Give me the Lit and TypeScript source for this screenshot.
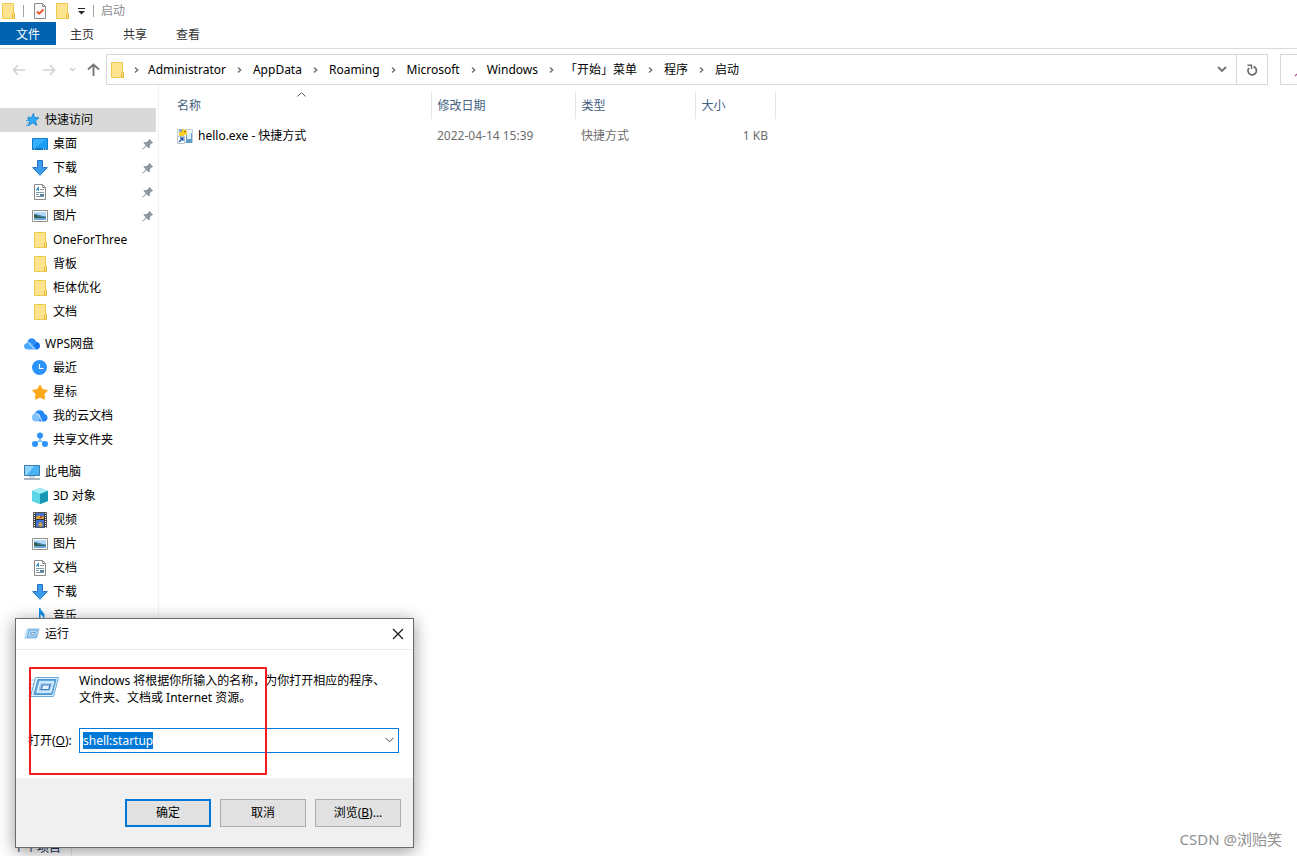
import { LitElement, html, svg, css, nothing, TemplateResult } from "lit";
import { customElement, property, query } from "lit/decorators.js";
import { classMap } from "lit/directives/class-map.js";

const icon = (w: number, h: number, body: unknown) =>
  html`<svg width=${w} height=${h} viewBox="0 0 ${w} ${h}" aria-hidden="true">${body}</svg>`;

const folder = () => icon(16, 16, svg`
  <path d="M2.500.5h11v10h1v5h-12z" fill="#ffe48f" stroke="#ecc94f"/>
  <path d="M12.500 15.500v-4l.8-1h1.200v5z" fill="#ffe48f" stroke="#e3bb3a"/>`);

const monitor = svg`
  <path d="M.5 1.500h15v10H.5z" fill="#49b4f5" stroke="#3d7ba6"/>
  <path d="M1 2h9L3 11H1z" fill="#8fd6ff"/>
  <path d="M5 12h6v2H5z" fill="#c9dbe6"/>
  <path d="M0 15h16" stroke="#8797a2" stroke-width="1.400"/>`;

const runGlyph = (size: number) => html`
  <svg width=${size} height=${size} viewBox="0 0 32 32" aria-hidden="true">
    <path d="M3 8h5M1 12h5M0 16h5M1 20h4M0 24h4" stroke="#b9dcf3" stroke-width="1.500"/>
    <path d="M7.500 5.500h23l-5 19h-23z" fill="#dff1fc" stroke="#6aa9d8" stroke-linejoin="round"/>
    <path d="M10 7.500h18l-4 15H6z" fill="#5fabe2" stroke="#4a93cd"/>
    <path d="M12 10h13.500l-2.800 10H9.200z" fill="#9accf2" stroke="#e9f6ff" stroke-width="1.300"/>
    <path d="M14.500 13h7.500l-1.300 4.500h-7.500z" fill="#e6f4fd" stroke="#4678ba" stroke-width="1.200"/>
  </svg>`;

const icons: Record<string, () => TemplateResult> = {
  folder,
  quick: () => icon(16, 16, svg`
    <path d="M9.500 1.200l1 4.300 4.500.2-3.400 3 1.200 4.800-4.100-2.600-4.200 2.800 1.400-4.700L3.200 6l4.300-.4z" fill="#31a8f5" stroke="#1482cf" stroke-width=".8"/>
    <path d="M2 8.500h3M3 11h2.500M2 13.500h2M4 5h2" stroke="#3a9fe0"/>`),
  desktop: () => icon(16, 16, svg`
    <path d="M.5 2.500h15v11H.5z" fill="#1b9df5" stroke="#147ac4"/>
    <path d="M1 3h13L3 12H1z" fill="#35b0ff"/>
    <path d="M1 13h14" stroke="#0a5d9c"/><path d="M2 13h1M11 13h1M13 13h1" stroke="#fff"/>`),
  download: () => icon(16, 16, svg`
    <path d="M5.500.5h5v7h4.800L8 15.300.7 7.500h4.800z" fill="#3a9bea" stroke="#2377c6"/>`),
  document: () => icon(16, 16, svg`
    <path d="M2.500.5h8l3 3v12h-11z" fill="#fff" stroke="#8a8a8a"/>
    <path d="M10.500.5v3h3" fill="none" stroke="#8a8a8a"/>
    <path d="M4 6.500L6.500 3v4M4.500 5.500h2.500" fill="none" stroke="#2f8fc9"/>
    <path d="M8 5.500h4M4 8.500h8M4 10.500h3M8 10.500h4M4 12.500h8" fill="none" stroke="#7f9aa8"/>
    <path d="M8 10h4v2H8z" fill="#4d8098"/>`),
  picture: () => icon(16, 16, svg`
    <path d="M.5 2.500h15v11H.5z" fill="#fff" stroke="#8f8f8f"/>
    <path d="M2 4h12v8H2z" fill="#b4d8f7"/>
    <path d="M2 6c4 0 7 2 12 2.500V10H2z" fill="#4684b0"/>
    <path d="M2 6.500c3 .5 4 2.500 7 2.500l5 .5v.5H2z" fill="#355e4d"/>
    <path d="M2 10h12v2H2z" fill="#6aa9d9"/>`),
  wps: () => icon(16, 16, svg`
    <path d="M4 5a5 5 0 0 1 8 1 4 4 0 0 1 4 4c0 2-1.500 3.500-4 3.500L5 6z" fill="#1673ee"/>
    <path d="M3.500 5.500C5 1.500 9.500 1 11.500 4.500l1 2-3 3z" fill="#2f8dfa"/>
    <path d="M3.500 6.500c2-1 4 0 5 1.500l4.500 5.500H4c-5 0-5.500-5.500-.5-7z" fill="#4aa8ff"/>
    <path d="M4.500 6.500L10.500 13.500" stroke="#fff" stroke-width=".8"/>`),
  recent: () => icon(16, 16, svg`
    <circle cx="7.500" cy="7.500" r="7.500" fill="#2b93fb"/>
    <path d="M7.500 4v4.500h4" fill="none" stroke="#fff" stroke-width="1.200"/>`),
  star: () => icon(16, 16, svg`
    <path d="M8 1l2.400 4.500 5.100.9-3.600 3.600.7 5.200L8 13l-4.600 2.200.7-5.200L.5 6.400l5.100-.9z" fill="#fea71b" stroke="#fea71b" stroke-linejoin="round"/>`),
  cloud: () => icon(16, 16, svg`
    <path d="M3 5.500a5 5 0 0 1 9.500.5A3.800 3.800 0 0 1 12 13.500H7z" fill="#2389fa"/>
    <circle cx="4" cy="9.500" r="4" fill="#7fc2ff"/>
    <path d="M4 5.500a4 4 0 0 1 4 3.500l2 4.500" fill="none" stroke="#fff" stroke-width=".8"/>`),
  share: () => icon(16, 16, svg`
    <path d="M8 4v4.500M8 8.500l-5 3M8 8.500l5 3" stroke="#5aadff" stroke-width="1.400"/>
    <circle cx="8" cy="3.500" r="3" fill="#2b93fb"/>
    <circle cx="3" cy="12" r="3" fill="#2b93fb"/>
    <circle cx="13" cy="12" r="3" fill="#2b93fb"/>`),
  pc: () => icon(16, 16, monitor),
  cube: () => icon(16, 16, svg`
    <path d="M8 0l8 3v10l-8 3-8-3V3z" fill="#2cbfd4"/>
    <path d="M8 0l8 3-8 3-8-3z" fill="#a3edf5"/>
    <path d="M0 3l8 3v10l-8-3z" fill="#5cd5e4"/>
    <path d="M8 6l8-3v10l-8 3z" fill="#1597b3"/>`),
  video: () => icon(16, 16, svg`
    <path d="M1.500.5h13v15h-13z" fill="#333" stroke="#555"/>
    <path d="M4 1h8v6H4zM4 8h8v7H4z" fill="#4472cf"/>
    <path d="M4 5l3-2 2 2 3-1v3H4z" fill="#d7a23b"/>
    <path d="M6 13l2-3 3 2-2 3z" fill="#d7a23b"/><path d="M8 4h2v2H8z" fill="#c5443a"/>
    <path d="M2.500 1v15M13.500 1v15" stroke="#fff" stroke-dasharray="1 1"/>`),
  music: () => icon(16, 16, svg`
    <path d="M7 0h1.500c0 3 4 4 4 7.500 0 1.500-.5 3-1.500 4 .5-3-1-4.500-2.500-5V13a3 2.500 0 1 1-1.500-2z" fill="#1593e6"/>`),
  pin: () => icon(12, 12, svg`
    <path d="M7.200.8l4 4-1.300.5-1.800 1.800-.3 2.600-.9.900-2.300-2.300L.9 11.600l-.5-.5L3.700 7.400 1.400 5.100l.9-.9 2.600-.3L6.700 2.100z" fill="#8c99a3"/>`),
  check: () => icon(16, 16, svg`
    <path d="M3.500.5h8l3 3v12h-11z" fill="#f7f7f7" stroke="#8c8c8c"/>
    <path d="M11.500.5v3h3" fill="none" stroke="#8c8c8c"/>
    <path d="M6 8.500l2.200 2.200L12.500 6.500" fill="none" stroke="#e8592b" stroke-width="1.800"/>`),
  menu: () => icon(9, 8, svg`<path d="M1 1.500h7" stroke="#222"/><path d="M1 4h7L4.500 7.500z" fill="#222"/>`),
  back: () => icon(14, 12, svg`<path d="M6 1L1.500 6 6 11M1.500 6H13" fill="none" stroke="#d2d2d2" stroke-width="1.600"/>`),
  forward: () => icon(14, 12, svg`<path d="M8 1l4.500 5L8 11M12.500 6H1" fill="none" stroke="#d2d2d2" stroke-width="1.600"/>`),
  history: () => icon(7, 5, svg`<path d="M1 1l2.500 2.500L6 1" fill="none" stroke="#cfcfcf" stroke-width="1.300"/>`),
  up: () => icon(13, 13, svg`<path d="M1 6.500L6.500 1.500l5.500 5M6.500 1.500V13" fill="none" stroke="#777" stroke-width="1.900"/>`),
  chevron: () => icon(5, 8, svg`<path d="M1 1.500L3.700 4 1 6.500" fill="none" stroke="#6e6e6e" stroke-width="1.400"/>`),
  down: () => icon(10, 7, svg`<path d="M1 1l4 4 4-4" fill="none" stroke="#747474" stroke-width="1.900"/>`),
  thinDown: () => icon(9, 6, svg`<path d="M.5.8l4 4 4-4" fill="none" stroke="#444"/>`),
  refresh: () => icon(12, 12, svg`
    <path d="M2.900 4A4.200 4.200 0 1 0 7.500 2.600" fill="none" stroke="#6b6b6b" stroke-width="1.700"/>
    <path d="M1.500 1.300h4v3.800" fill="none" stroke="#6b6b6b" stroke-width="1.500"/>`),
  sort: () => icon(9, 5, svg`<path d="M.5 4.500l4-4 4 4" fill="none" stroke="#555"/>`),
  close: () => icon(12, 12, svg`<path d="M1 1l10 10M11 1L1 11" stroke="#111" stroke-width="1.100"/>`),
  app: () => icon(16, 16, svg`
    <path d="M.5 1.500h15v13H.5z" fill="#eef4f8" stroke="#c3d0d9"/>
    <path d="M9 5h6v10H9z" fill="#5f9fc6"/><path d="M10 4h4v7h-4z" fill="#e3eff6"/>
    <path d="M2 1h5l3 2v4H7v2H2z" fill="#f8cf2c"/><path d="M2 1h3v3H2z" fill="#8aa7c4"/>
    <path d="M7 3h2v1H7z" fill="#8a6d00"/>
    <path d="M.5 8.500h7v7h-7z" fill="#fff" stroke="#b9c5cc"/>
    <path d="M2 14l3.500-3.500M3 10h3v3" fill="none" stroke="#1e5fae" stroke-width="1.300"/>`),
  lens: () => icon(4, 14, svg`<path d="M2 13l2-2" stroke="#b25a9b" stroke-width="1.300"/>`),
};

interface NavItem { icon: string; label: string; pinned?: boolean; }
interface NavGroup extends NavItem { selected?: boolean; items: NavItem[]; }

const groups: NavGroup[] = [
  { icon: "quick", label: "快速访问", selected: true, items: [
    { icon: "desktop", label: "桌面", pinned: true },
    { icon: "download", label: "下载", pinned: true },
    { icon: "document", label: "文档", pinned: true },
    { icon: "picture", label: "图片", pinned: true },
    { icon: "folder", label: "OneForThree" },
    { icon: "folder", label: "背板" },
    { icon: "folder", label: "柜体优化" },
    { icon: "folder", label: "文档" },
  ] },
  { icon: "wps", label: "WPS网盘", items: [
    { icon: "recent", label: "最近" },
    { icon: "star", label: "星标" },
    { icon: "cloud", label: "我的云文档" },
    { icon: "share", label: "共享文件夹" },
  ] },
  { icon: "pc", label: "此电脑", items: [
    { icon: "cube", label: "3D 对象" },
    { icon: "video", label: "视频" },
    { icon: "picture", label: "图片" },
    { icon: "document", label: "文档" },
    { icon: "download", label: "下载" },
    { icon: "music", label: "音乐" },
  ] },
];

const crumbs = ["Administrator", "AppData", "Roaming", "Microsoft", "Windows", "「开始」菜单", "程序", "启动"];

const base = css`
  * { box-sizing: border-box; }
  svg { display: block; flex: none; }
  button, input { font: inherit; color: inherit; margin: 0; padding: 0; border: 0; background: none; border-radius: 0; }
  a { color: inherit; text-decoration: none; }
  ul { list-style: none; margin: 0; padding: 0; }
`;

@customElement("nav-tree")
export class NavTree extends LitElement {
  static styles = [base, css`
    :host { display: block; }
    .group { margin-bottom: 8px; }
    .row { display: flex; align-items: center; height: 24px; gap: 5px; margin-right: 2px; padding: 0 2px 0 24px; white-space: nowrap; }
    .child { padding-left: 32px; }
    .selected { background: #d9d9d9; }
    .label { flex: 1; }
  `];
  row(item: NavItem, cls: Record<string, boolean>) {
    return html`<a href="#" class=${classMap({ row: true, ...cls })}>
      ${icons[item.icon]()}<span class="label">${item.label}</span>${item.pinned ? icons.pin() : nothing}</a>`;
  }
  render() {
    return groups.map((g) => html`<ul class="group">
      <li>${this.row(g, { selected: !!g.selected })}</li>
      ${g.items.map((i) => html`<li>${this.row(i, { child: true })}</li>`)}
    </ul>`);
  }
}

@customElement("file-list")
export class FileList extends LitElement {
  static styles = [base, css`
    :host { display: block; }
    table { border-collapse: collapse; table-layout: fixed; width: 604px; }
    th { position: relative; height: 27px; padding: 0 6px; font-weight: 400; text-align: left; color: #44607f; border-right: 1px solid #e5e5e5; }
    td { height: 34px; padding: 0 7px 0 6px; color: #6d6d6d; white-space: nowrap; }
    .name { width: 260px; }
    .date { width: 144px; }
    .type { width: 120px; }
    .size { width: 80px; }
    .sort { position: absolute; top: 0; left: 50%; margin-left: -4px; }
    .file { display: flex; align-items: center; gap: 5px; color: #000; }
    .num { text-align: right; }
  `];
  render() {
    return html`<table>
      <thead><tr>
        <th class="name">名称<span class="sort">${icons.sort()}</span></th>
        <th class="date">修改日期</th><th class="type">类型</th><th class="size">大小</th>
      </tr></thead>
      <tbody><tr>
        <td><a class="file" href="#">${icons.app()}hello.exe - 快捷方式</a></td>
        <td>2022-04-14 15:39</td><td>快捷方式</td><td class="num">1 KB</td>
      </tr></tbody>
    </table>`;
  }
}

@customElement("run-dialog")
export class RunDialog extends LitElement {
  @property() value = "shell:startup";
  @query("input") field!: HTMLInputElement;

  static styles = [base, css`
    :host { display: block; width: 399px; background: #fff; border: 1px solid #6b6b6b; box-shadow: 0 3px 16px rgba(0, 0, 0, .42); }
    .title { display: flex; align-items: center; gap: 5px; height: 31px; padding: 0 9px 1px 8px; border-bottom: 1px solid #ececec; }
    .title span { flex: 1; }
    .body { position: relative; height: 128px; padding: 22px 14px 0 12px; }
    .intro { display: grid; grid-template-columns: 51px 1fr; }
    .intro p { margin: 0; padding-right: 12px; line-height: 17px; }
    .open { display: grid; grid-template-columns: 51px 1fr; align-items: center; margin-top: 22px; }
    .combo { display: flex; align-items: center; height: 25px; padding: 0 4px 1px 3px; border: 1px solid #0078d7; }
    .combo input { flex: 1; min-width: 0; height: 17px; line-height: 17px; outline: none; }
    .combo input::selection { background: #0078d7; color: #fff; }
    .mark { position: absolute; left: 13px; top: 17px; width: 238px; height: 108px; border: 2px solid #f5191c; border-radius: 1px; pointer-events: none; }
    .actions { display: flex; justify-content: flex-end; gap: 9px; padding: 21px 12px 20px; background: #f0f0f0; }
    .actions button { width: 86px; height: 28px; background: #e1e1e1; border: 1px solid #adadad; }
    .actions .primary { border: 2px solid #0078d7; }
  `];
  firstUpdated() {
    this.field.focus({ preventScroll: true });
    this.field.select();
  }
  render() {
    return html`
      <div class="title">${runGlyph(16)}<span>运行</span><button aria-label="关闭">${icons.close()}</button></div>
      <div class="body">
        <div class="intro">${runGlyph(32)}
          <p>Windows 将根据你所输入的名称，为你打开相应的程序、文件夹、文档或 Internet 资源。</p></div>
        <div class="open">
          <label for="cmd">打开(<u>O</u>):</label>
          <div class="combo"><input id="cmd" type="text" spellcheck="false" .value=${this.value}>
            <button aria-label="展开">${icons.thinDown()}</button></div>
        </div>
        <div class="mark"></div>
      </div>
      <div class="actions">
        <button class="primary">确定</button><button>取消</button><button>浏览(<u>B</u>)...</button>
      </div>`;
  }
}

@customElement("app-root")
export class AppRoot extends LitElement {
  static styles = [base, css`
    :host { display: flex; flex-direction: column; position: relative; height: 100vh; overflow: hidden; background: #fff; color: #000;
      font: 12px/16px "Noto Sans", "Noto Sans CJK SC", sans-serif; }
    .caption { display: flex; align-items: center; height: 22px; gap: 7px; color: #8c8c8c; }
    .quick { display: flex; align-items: center; gap: 7px; }
    .bar { width: 1px; height: 12px; background: #a3a3a3; }
    .tabs { display: flex; height: 27px; padding-bottom: 3px; border-bottom: 1px solid #dadbdc; }
    .tab { padding: 2px 14px 0; margin-right: 1px; color: #333; }
    .tab.file { padding: 2px 16px 0; margin-right: 0; background: #0063b1; color: #fff; }
    .address { display: flex; align-items: center; height: 31px; margin-top: 5px; }
    .arrows { display: grid; grid-template-columns: 30px 27px 18px 1fr; align-items: center; width: 106px; padding-left: 12px; }
    .path { flex: 1; display: flex; align-items: center; height: 31px; min-width: 0; padding-left: 2px; border: 1px solid #d9d9d9; }
    .crumbs { flex: 1; display: flex; align-items: center; min-width: 0; white-space: nowrap; }
    .crumbs li { display: flex; align-items: center; }
    .sep { display: flex; justify-content: center; width: 27px; }
    .crumbs li:first-child .sep { width: 23px; }
    .path button { display: flex; justify-content: center; align-items: center; width: 29px; height: 29px; }
    .path .reload { width: 31px; border-left: 1px solid #d9d9d9; }
    .search { display: flex; align-items: center; justify-content: flex-end; width: 17px; height: 31px; margin-left: 12px; border: 1px solid #d9d9d9; border-right: 0; }
    .main { flex: 1; display: flex; min-height: 0; overflow: hidden; }
    .side { flex: none; width: 159px; padding-top: 23px; border-right: 1px solid #f2f2f2; overflow: hidden; }
    .files { flex: 1; padding: 7px 0 0 12px; }
    .status { display: flex; align-items: center; height: 17px; padding-left: 15px; gap: 10px; color: #1e395b; }
    .status i { width: 1px; height: 17px; background: #e8e8e8; }
    .dialog { position: absolute; left: 15px; bottom: 8px; }
    .credit { position: absolute; right: 15px; bottom: 7px; font-size: 15px; line-height: 20px; color: #8f8f8f; }
  `];
  render() {
    return html`
      <header class="caption">
        ${folder()}<span class="bar"></span>
        <span class="quick">${icons.check()}${folder()}${icons.menu()}</span>
        <span class="bar"></span><span>启动</span>
      </header>
      <nav class="tabs">
        <button class="tab file">文件</button><button class="tab">主页</button>
        <button class="tab">共享</button><button class="tab">查看</button>
      </nav>
      <div class="address">
        <div class="arrows">
          <button aria-label="后退">${icons.back()}</button><button aria-label="前进">${icons.forward()}</button>
          <button aria-label="历史">${icons.history()}</button><button aria-label="向上">${icons.up()}</button>
        </div>
        <div class="path">
          ${folder()}
          <ul class="crumbs">${crumbs.map((c) => html`<li><span class="sep">${icons.chevron()}</span><a href="#">${c}</a></li>`)}</ul>
          <button aria-label="以前的位置">${icons.down()}</button>
          <button class="reload" aria-label="刷新">${icons.refresh()}</button>
        </div>
        <div class="search">${icons.lens()}</div>
      </div>
      <main class="main">
        <aside class="side"><nav-tree></nav-tree></aside>
        <section class="files"><file-list></file-list></section>
      </main>
      <footer class="status"><span>1 个项目</span><i></i></footer>
      <run-dialog class="dialog" role="dialog" aria-label="运行"></run-dialog>
      <div class="credit">CSDN @浏贻笑</div>`;
  }
}
